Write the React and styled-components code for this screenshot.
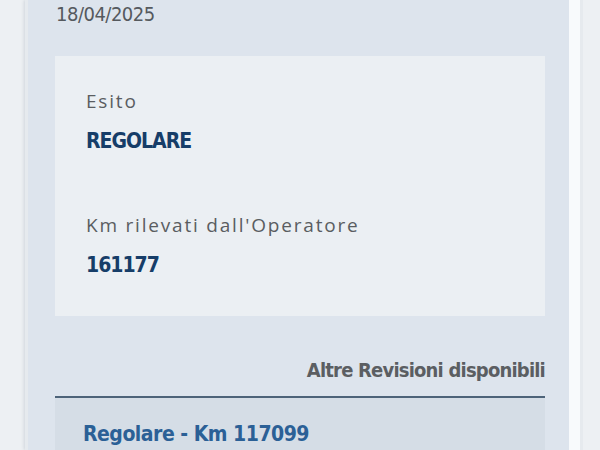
import React from "react";
import styled, { createGlobalStyle } from "styled-components";

const GlobalStyle = createGlobalStyle`
  html, body {
    margin: 0;
    padding: 0;
    background: #edf0f3;
    height: 450px;
    overflow: hidden;
  }
`;

const narrow = `"DejaVu Sans Condensed", "Liberation Sans", sans-serif`;

const Page = styled.div`
  display: flex;
  height: 450px;
  padding-left: 28px;
`;

const Card = styled.div`
  width: 552px;
  box-sizing: border-box;
  background: #dde4ed;
  padding: 0 24px 0 27px;
  box-shadow: -4px 0 3px rgba(60, 80, 100, 0.16);
  border-right: 11px solid #f8fafc;
  outline: 3px solid #e6eaee;
`;

const DateText = styled.div`
  font-family: ${narrow};
  font-size: 20px;
  letter-spacing: -0.5px;
  color: #55595e;
  line-height: 28px;
  padding-left: 1px;
`;

const Panel = styled.div`
  margin-top: 28px;
  background: #ebeff3;
  padding: 33px 31px 37px;
  display: flex;
  flex-direction: column;
`;

const Field = styled.div`
  display: flex;
  flex-direction: column;
  gap: 14px;
  & + & {
    margin-top: 58px;
  }
`;

const Label = styled.div`
  font-family: "Open Sans", "Noto Sans", sans-serif;
  font-size: 19px;
  letter-spacing: 1.8px;
  color: #5a5d61;
  line-height: 24px;
`;

const Value = styled.div`
  font-family: ${narrow};
  font-weight: bold;
  font-size: 21px;
  letter-spacing: -1px;
  color: #163d68;
  line-height: 28px;
`;

const SectionTitle = styled.div`
  font-family: ${narrow};
  font-weight: bold;
  font-size: 20px;
  letter-spacing: -0.8px;
  color: #5b5e62;
  text-align: right;
  line-height: 28px;
  margin-top: 40px;
  padding-bottom: 12px;
  border-bottom: 2px solid #4d6379;
`;

const RevisionRow = styled.div`
  background: #d5dde6;
  padding: 21px 28px;
  font-family: ${narrow};
  font-weight: bold;
  font-size: 21px;
  letter-spacing: -0.5px;
  color: #2b6096;
  line-height: 30px;
`;

export default function App() {
  return (
    <>
      <GlobalStyle />
      <Page>
        <Card>
          <DateText>18/04/2025</DateText>
          <Panel>
            <Field>
              <Label>Esito</Label>
              <Value>REGOLARE</Value>
            </Field>
            <Field>
              <Label>Km rilevati dall'Operatore</Label>
              <Value>161177</Value>
            </Field>
          </Panel>
          <SectionTitle>Altre Revisioni disponibili</SectionTitle>
          <RevisionRow>Regolare - Km 117099</RevisionRow>
        </Card>
      </Page>
    </>
  );
}
